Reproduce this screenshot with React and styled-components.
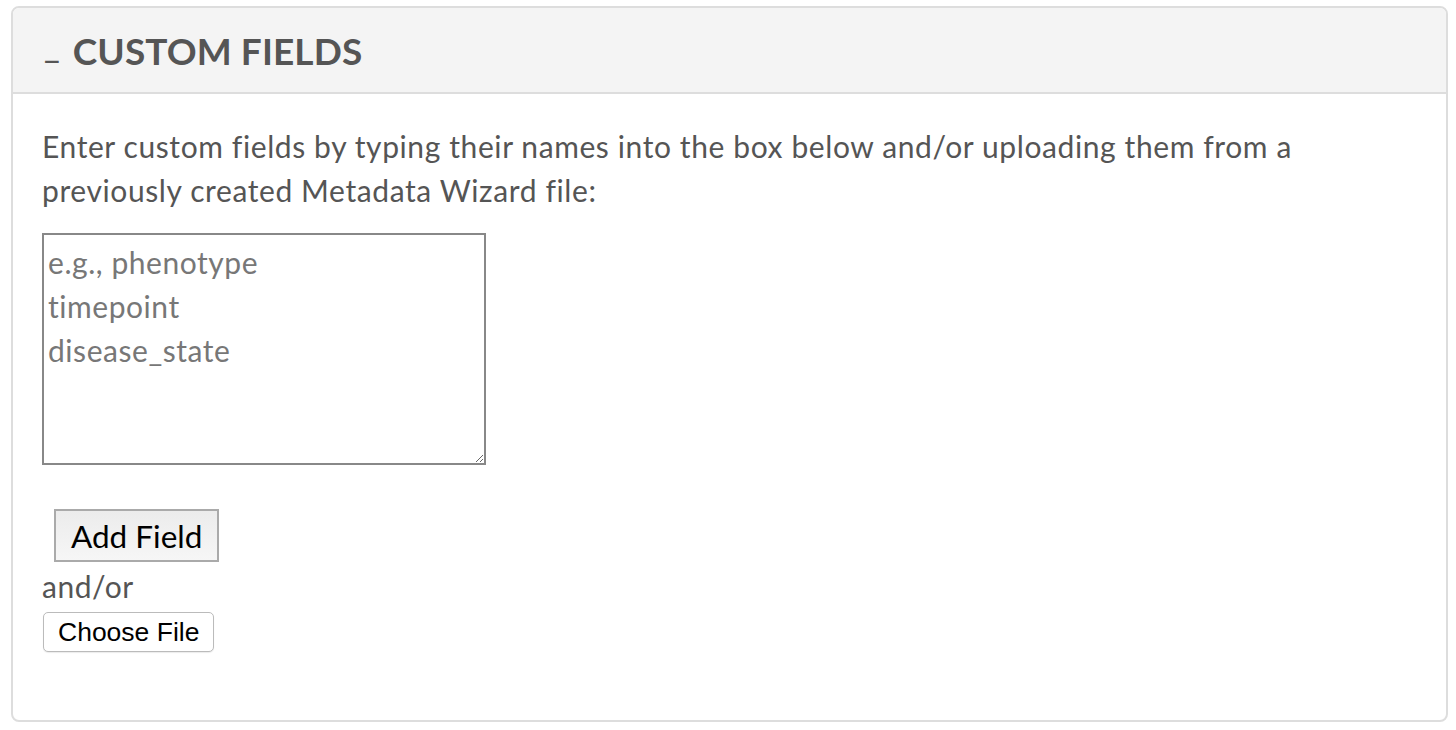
import React from 'react';
import styled, { createGlobalStyle } from 'styled-components';

const GlobalStyle = createGlobalStyle`
  html, body {
    margin: 0;
    padding: 0;
    background: #fff;
  }
  body {
    font-family: Lato, "Open Sans", sans-serif;
  }
`;

const Page = styled.div`
  padding: 6px 8px 10px 11px;
`;

const Panel = styled.section`
  border: 2px solid #ddd;
  border-radius: 8px;
  background: #fff;
  overflow: hidden;
`;

const PanelHeader = styled.div`
  background: #f4f4f4;
  border-bottom: 2px solid #ddd;
  height: 84px;
  display: flex;
  align-items: center;
  padding-left: 29px;
  color: #555;
`;

const Toggle = styled.span`
  font-size: 34px;
  font-weight: 400;
  margin-right: 11px;
  padding-top: 16px;
`;

const Title = styled.h2`
  margin: 0;
  font-size: 37px;
  font-weight: 700;
  letter-spacing: 0.1px;
  text-transform: uppercase;
`;

const PanelBody = styled.div`
  padding: 30px 29px 68px 29px;
  display: flex;
  flex-direction: column;
  align-items: flex-start;
`;

const Intro = styled.p`
  margin: 0 0 21px;
  font-size: 30px;
  letter-spacing: 0.6px;
  line-height: 44px;
  color: #555;
  max-width: 1300px;
`;

const FieldsBox = styled.textarea`
  width: 444px;
  height: 232px;
  box-sizing: border-box;
  border: 2px solid #888;
  padding: 5px 4px;
  font-family: Lato, sans-serif;
  font-size: 30px;
  letter-spacing: 0.55px;
  line-height: 44px;
  color: #333;
  resize: both;
  margin: 0 0 44px;
  &::placeholder {
    color: #777;
  }
`;

const AddButton = styled.button`
  margin-left: 12px;
  height: 53px;
  padding: 0 15px;
  border: 2px solid #aaa;
  background: linear-gradient(#ececec, #f6f6f6);
  font-family: Lato, sans-serif;
  font-size: 31.5px;
  color: #000;
`;

const OrText = styled.div`
  font-size: 30px;
  letter-spacing: 0.5px;
  line-height: 46px;
  margin-top: 1px;
  color: #555;
`;

const FileButton = styled.label`
  display: inline-flex;
  align-items: center;
  height: 40px;
  box-sizing: border-box;
  padding: 0 14px;
  margin-top: 3px;
  margin-left: 1px;
  border: 1px solid #bbb;
  border-radius: 5px;
  background: #fff;
  box-shadow: 0 1px 1px rgba(0, 0, 0, 0.08);
  font-family: "Liberation Sans", Arial, sans-serif;
  font-size: 26.5px;
  color: #000;
`;

export default function App() {
  return (
    <Page>
      <GlobalStyle />
      <Panel>
        <PanelHeader>
          <Toggle>–</Toggle>
          <Title>Custom Fields</Title>
        </PanelHeader>
        <PanelBody>
          <Intro>
            Enter custom fields by typing their names into the box below and/or uploading them from a
            previously created Metadata Wizard file:
          </Intro>
          <FieldsBox placeholder={'e.g., phenotype\ntimepoint\ndisease_state'} />
          <AddButton>Add Field</AddButton>
          <OrText>and/or</OrText>
          <FileButton>Choose File</FileButton>
        </PanelBody>
      </Panel>
    </Page>
  );
}
